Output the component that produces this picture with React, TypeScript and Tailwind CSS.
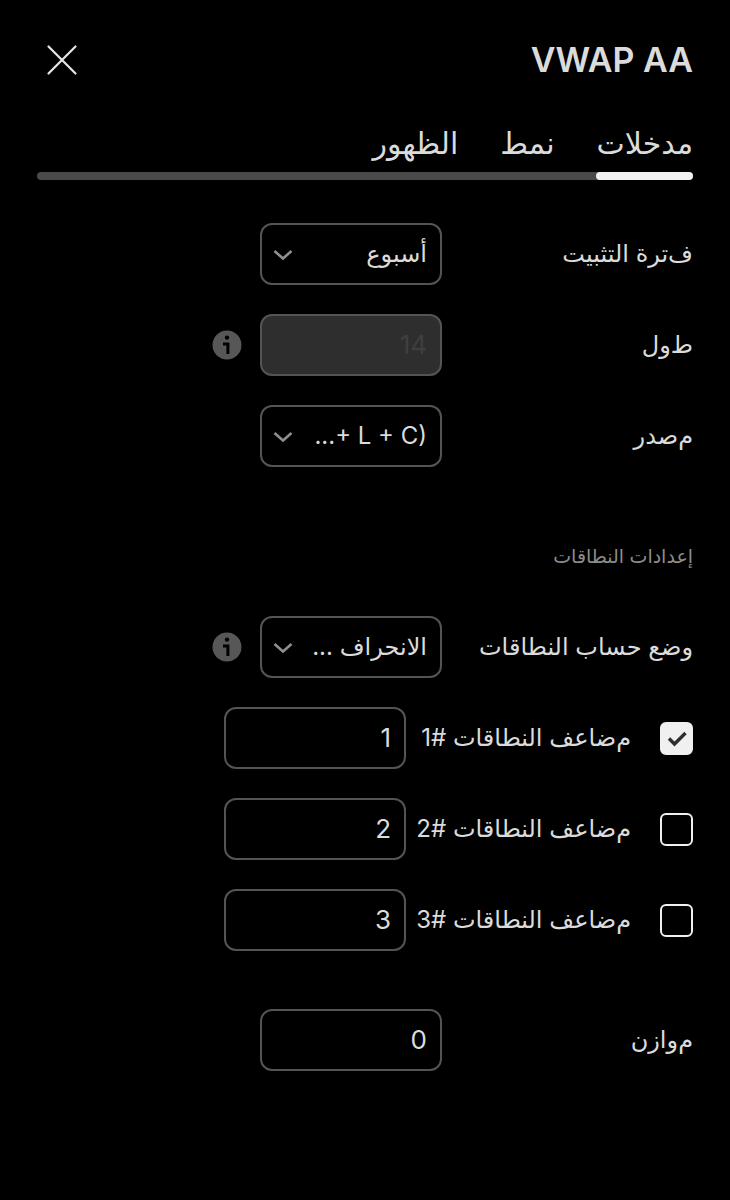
import { useId, useState } from "react";
import type { ReactNode } from "react";
import clsx from "clsx";

const tabs = ["مدخلات", "نمط", "الظهور"];

const bands = [
  { label: "م\u200cضاعف النطاقات #1", value: "1", enabled: true },
  { label: "م\u200cضاعف النطاقات #2", value: "2", enabled: false },
  { label: "م\u200cضاعف النطاقات #3", value: "3", enabled: false },
];

const fieldClass =
  "h-[62px] w-[182px] shrink-0 appearance-none rounded-xl border-2 border-[#545454] bg-transparent px-[13px] text-right text-[#dbdbdb] outline-none";

function InfoButton() {
  return (
    <button type="button" aria-label="معلومات" className="mr-[18px] shrink-0">
      <svg width="30" height="30" viewBox="0 0 30 30" className="block">
        <circle cx="15" cy="15" r="14.5" fill="#575757" />
        <circle cx="15" cy="7.6" r="2.2" fill="#000" />
        <path d="M11 14h4.9v10" fill="none" stroke="#000" strokeWidth="3" />
      </svg>
    </button>
  );
}

function Row({ id, label, children }: { id: string; label: string; children: ReactNode }) {
  return (
    <div className="flex items-center">
      <label htmlFor={id} className="w-[251px] shrink-0 text-[24px]">
        {label}
      </label>
      {children}
    </div>
  );
}

function SelectField({ id, options, dir }: { id: string; options: string[]; dir?: "ltr" | "rtl" }) {
  return (
    <div className="relative shrink-0">
      <select id={id} dir={dir} className={clsx(fieldClass, "block text-[24px]")}>
        {options.map((option) => (
          <option key={option}>{option}</option>
        ))}
      </select>
      <svg
        width="20"
        height="12"
        viewBox="0 0 20 12"
        className="pointer-events-none absolute left-[13px] top-[26px]"
      >
        <path d="M1.5 2 10 9.5 18.5 2" fill="none" stroke="#8f8f8f" strokeWidth="2.6" />
      </svg>
    </div>
  );
}

function BandRow({ label, value, enabled }: { label: string; value: string; enabled: boolean }) {
  const id = useId();
  const [checked, setChecked] = useState(enabled);

  return (
    <div className="flex items-center">
      <label htmlFor={id} className="flex w-[287px] shrink-0 items-center gap-[29px]">
        <span className="relative size-[33px] shrink-0">
          <input
            id={id}
            type="checkbox"
            checked={checked}
            onChange={(e) => setChecked(e.target.checked)}
            className="block size-[33px] appearance-none rounded-md border-2 border-[#f0f0f0] checked:bg-[#f0f0f0]"
          />
          {checked && (
            <svg
              width="33"
              height="33"
              viewBox="0 0 33 33"
              className="pointer-events-none absolute inset-0"
            >
              <path d="M9 16.5 14.5 22 25.5 11" fill="none" stroke="#2e2e2e" strokeWidth="3.4" />
            </svg>
          )}
        </span>
        <span className="whitespace-nowrap text-[24px]">{label}</span>
      </label>
      <input aria-label={label} defaultValue={value} className={clsx(fieldClass, "pb-0.5 text-[26px]")} />
    </div>
  );
}

export default function App() {
  const [active, setActive] = useState(0);

  return (
    <main
      dir="rtl"
      className="min-h-screen bg-black px-[37px] pb-24 pt-9 font-['Inter','DejaVu_Sans',sans-serif] text-[#dbdbdb]"
    >
      <header className="flex items-center justify-between">
        <h1 dir="ltr" className="text-[34px] font-semibold leading-[48px]">
          VWAP AA
        </h1>
        <button type="button" aria-label="إغلاق" className="ml-[9px]">
          <svg width="32" height="32" viewBox="0 0 32 32" className="block">
            <path
              d="M2.5 2.5 29.5 29.5M29.5 2.5 2.5 29.5"
              stroke="#e6e6e6"
              strokeWidth="2.2"
              strokeLinecap="round"
            />
          </svg>
        </button>
      </header>

      <div role="tablist" className="relative mt-9 flex gap-[42px]">
        <div className="absolute inset-x-0 bottom-0 h-2 rounded-full bg-[#4a4a4a]" />
        {tabs.map((tab, index) => (
          <button
            key={tab}
            type="button"
            role="tab"
            aria-selected={index === active}
            onClick={() => setActive(index)}
            className={clsx(
              "relative h-[60px] pb-3.5 text-[30px] font-medium leading-[44px]",
              index === active &&
                "after:absolute after:inset-x-0 after:bottom-0 after:h-2 after:rounded-full after:bg-[#f2f2f2]"
            )}
          >
            {tab}
          </button>
        ))}
      </div>

      <form className="mt-[43px] flex flex-col gap-[29px]">
        {/* the leading letter of these labels stays unjoined */}
        <Row id="anchor" label={"ف\u200cترة التثبيت"}>
          <SelectField id="anchor" options={["أسبوع", "شهر", "سنة"]} />
        </Row>
        <Row id="length" label={"ط\u200cول"}>
          <input
            id="length"
            disabled
            defaultValue="14"
            className={clsx(fieldClass, "pb-0.5 text-[26px] disabled:bg-[#2e2e2e] disabled:text-[#3f3f3f]")}
          />
          <InfoButton />
        </Row>
        <Row id="source" label={"م\u200cصدر"}>
          <SelectField id="source" dir="ltr" options={["...+ L + C)"]} />
        </Row>

        <h2 className="mt-[31px] text-[19px] leading-[60px] text-[#8c8c8c]">إعدادات النطاقات</h2>

        <Row id="mode" label="وضع حساب النطاقات">
          <SelectField id="mode" options={["الانحراف ..."]} />
          <InfoButton />
        </Row>
        {bands.map((band) => (
          <BandRow key={band.label} {...band} />
        ))}

        <div className="mt-[29px]">
          <Row id="offset" label={"م\u200cوازن"}>
            <input id="offset" defaultValue="0" className={clsx(fieldClass, "pb-0.5 text-[26px]")} />
          </Row>
        </div>
      </form>
    </main>
  );
}
